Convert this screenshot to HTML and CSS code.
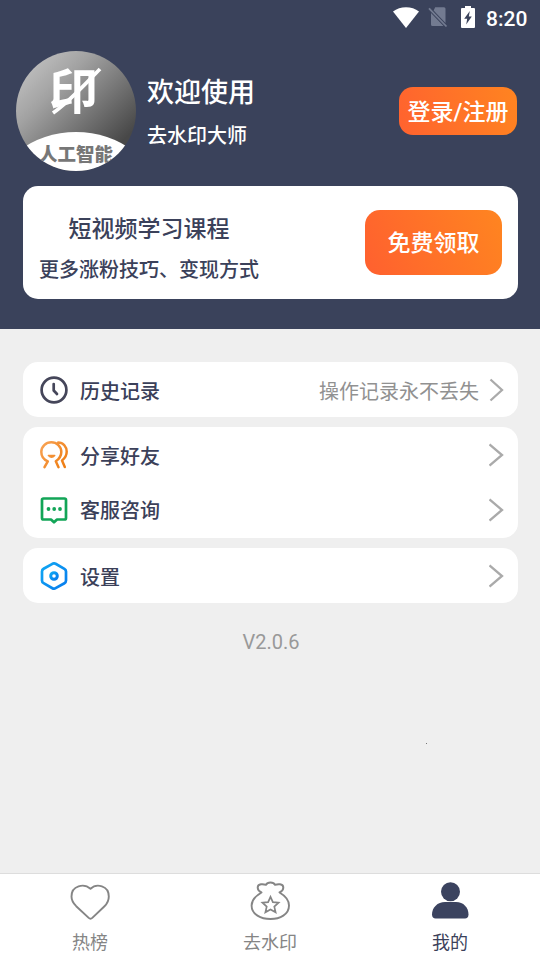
FILE: index.html
```html
<!DOCTYPE html>
<html lang="zh-CN">
<head>
<meta charset="utf-8">
<title>我的</title>
<link rel="stylesheet" href="styles.css">
</head>
<body>
<div class="app">
  <header class="header">
    <div class="status">
      <svg class="wifi" width="26" height="21" viewBox="0 0 26 21"><path d="M0 4.500C7-1.300 19-1.300 26 4.500L13 21Z" fill="#fff"/></svg>
      <svg class="sim" width="20" height="22" viewBox="0 0 20 22"><path d="M7.200 1.300H16q1.500 0 1.500 1.500v14.300L5.600 4.500ZM3 7l12.500 13H4.500q-1.500 0-1.500-1.500Z" fill="#737b91"/><path d="M1 2.300 18.500 20.500" stroke="#737b91" stroke-width="1.800"/></svg>
      <svg class="battery" width="14" height="22" viewBox="0 0 14 22"><path d="M4 0h6v2h3q1 0 1 1v18q0 1-1 1H1q-1 0-1-1V3Q0 2 1 2h3Z" fill="#fff"/><path d="M8.800 5 3.200 12.800H6.200L5.200 18.500 10.800 10.500H7.800Z" fill="#3a425b"/></svg>
      <span class="time">8:20</span>
    </div>
    <div class="profile">
      <div class="avatar">
        <span class="avatar-mark">印</span>
        <svg class="avatar-slash" width="52" height="50" viewBox="0 0 52 50"><path d="M2 47C18 36 34 18 49 3" fill="none" stroke="#fff" stroke-width="3.800"/></svg>
        <div class="avatar-base"></div>
        <span class="avatar-caption">人工智能</span>
      </div>
      <div class="names">
        <div class="welcome">欢迎使用</div>
        <div class="appname">去水印大师</div>
      </div>
      <div class="login">登录/注册</div>
    </div>
    <div class="promo">
      <div class="promo-text">
        <div class="promo-title">短视频学习课程</div>
        <div class="promo-sub">更多涨粉技巧、变现方式</div>
      </div>
      <div class="claim">免费领取</div>
    </div>
  </header>
  <main class="main">
    <section class="card">
      <div class="row">
        <svg class="icon" width="28" height="28" viewBox="0 0 28 28" fill="none" stroke="#45465a" stroke-width="2.700" stroke-linecap="round" stroke-linejoin="round"><circle cx="14" cy="14" r="12.400"/><path d="M13.700 8v6.500l3.300 3.500"/></svg>
        <span class="label">历史记录</span><span class="hint">操作记录永不丢失</span>
        <svg class="chevron" width="15" height="24" viewBox="0 0 15 24"><path d="M1.500 1.500 13 12 1.500 22.500"/></svg>
      </div>
    </section>
    <section class="card">
      <div class="row">
        <svg class="icon" width="28" height="28" viewBox="0 0 28 28" fill="none" stroke="url(#orange)" stroke-width="2.500" stroke-linecap="round" stroke-linejoin="round"><defs><linearGradient id="orange" gradientUnits="userSpaceOnUse" x1="0" y1="0" x2="28" y2="20"><stop stop-color="#f9a65a"/><stop offset="1" stop-color="#ee7d13"/></linearGradient></defs><path d="M4.500 26.200 7.800 20.300C3.500 18.500 1.300 15 1.300 11A10 9.700 0 0 1 21.300 11c0 4-2.200 7-5.500 9.300l2.700 5.900M18.200 1.400c5 0 8.500 4.600 8.500 9.200 0 3.700-1.700 6.700-4.700 8.900l2.800 6.500"/><path d="M8.300 14.500h6.500q-3.200 3.500-6.500 0Z" stroke-width="1.300" fill="#ef8a2c"/></svg>
        <span class="label">分享好友</span>
        <svg class="chevron" width="15" height="24" viewBox="0 0 15 24"><path d="M.5 1.500 13 12 .5 22.500"/></svg>
      </div>
      <div class="row">
        <svg class="icon" width="28" height="28" viewBox="0 0 28 28" fill="none" stroke="#12a557" stroke-width="2.700" stroke-linejoin="round"><path d="M3.500 2.500h21q1.500 0 1.500 1.500v18q0 1.500-1.500 1.500H17l-3 2.800-3-2.800H3.500Q2 23.500 2 22V4q0-1.500 1.500-1.500Z"/><g fill="#12a557" stroke="none"><circle cx="8.500" cy="13" r="1.900"/><circle cx="14.200" cy="13" r="1.900"/><circle cx="20" cy="13" r="1.900"/></g></svg>
        <span class="label">客服咨询</span>
        <svg class="chevron" width="15" height="24" viewBox="0 0 15 24"><path d="M.5 1.500 13 12 .5 22.500"/></svg>
      </div>
    </section>
    <section class="card">
      <div class="row">
        <svg class="icon" width="28" height="28" viewBox="0 0 28 28" fill="none" stroke="url(#blue)" stroke-width="2.700" stroke-linejoin="round"><defs><linearGradient id="blue" x1="0" y1="0" x2="1" y2="1"><stop stop-color="#10a8f3"/><stop offset="1" stop-color="#087bed"/></linearGradient></defs><path d="M12.400 1.800q1.600-.9 3.200 0l8.800 5q1.600.9 1.600 2.700v9q0 1.800-1.600 2.700l-8.800 5q-1.600.9-3.200 0l-8.800-5Q2 20.300 2 18.500v-9Q2 7.700 3.600 6.800Z"/><circle cx="14" cy="14" r="3.300" stroke-width="3"/></svg>
        <span class="label">设置</span>
        <svg class="chevron" width="15" height="24" viewBox="0 0 15 24"><path d="M.5 1.500 13 12 .5 22.500"/></svg>
      </div>
    </section>
    <div class="version">V2.0.6</div>
    <i class="speck"></i>
  </main>
  <nav class="tabs">
    <div class="tab">
      <svg width="42" height="42" viewBox="0 0 42 42" fill="none" stroke="#858585" stroke-width="1.900" stroke-linejoin="round"><path d="M21.500 7.800C27.500 2 39.800 4.500 39.800 15.500c0 4.300-1.500 7-4.300 9.700L23.300 36.900q-1.800 1.700-3.600 0L7.200 25.200C4 22 2.500 19 2.500 15.500 2.500 4.500 15 2 21.500 7.800Z"/></svg>
      <span>热榜</span>
    </div>
    <div class="tab">
      <svg width="42" height="42" viewBox="0 0 42 42" fill="none" stroke="#858585" stroke-width="1.900" stroke-linejoin="round"><path d="M12.500 11.500C7.500 9.500 7.500 3.800 12 3.300q2.500-.3 5 .5C18.500.7 24.500.7 26 3.800q2.500-.8 5-.5C35.500 3.800 35.500 9.500 30.500 11.500 36.500 15 40 19 40 24.500 40 33.500 31 38 21.500 38S2.600 33.500 2.600 24.500C2.600 19 6.500 15 12.500 11.500Z"/><path d="m21.500 15.800 2.400 5.300 5.700.6-4.300 3.900 1.300 5.700-5.100-2.900-5.100 2.900 1.300-5.700-4.300-3.900 5.700-.6Z" stroke-width="1.700" stroke-linejoin="miter"/></svg>
      <span>去水印</span>
    </div>
    <div class="tab active">
      <svg width="42" height="42" viewBox="0 0 42 42" fill="#3b435f"><circle cx="21.500" cy="10.700" r="9.500"/><path d="M16 21h11c7.500 0 12.500 5.500 12.500 12.500 0 2.700-1.500 4-3.500 4H6.500c-2 0-3.500-1.300-3.500-4C3 26.500 8.500 21 16 21Z"/></svg>
      <span>我的</span>
    </div>
  </nav>
</div>
</body>
</html>
```
FILE: styles.css
```css
* { box-sizing: border-box; }
body { margin: 0; font-family: Roboto, "Noto Sans CJK SC", sans-serif; }
svg { display: block; flex: none; }
.app { width: 540px; height: 960px; display: flex; flex-direction: column; background: #efefef; overflow: hidden; }
.header { height: 329px; background: #3a425b; color: #fff; }
.status { height: 34px; padding-right: 12px; display: flex; align-items: center; justify-content: flex-end; }
.wifi { margin-right: 9px; }
.sim { margin-right: 13px; }
.battery { margin-right: 11px; }
.time { font-size: 21px; font-weight: 500; line-height: 34px; padding-top: 3px; width: 42px; white-space: nowrap; }
.profile { display: flex; align-items: center; height: 120px; margin: 17px 23px 0 16px; }
.avatar { position: relative; width: 120px; height: 120px; border-radius: 50%; overflow: hidden; background: linear-gradient(135deg, #c6c6c6 5%, #a2a2a2 32%, #484848 82%); }
.avatar-mark { position: absolute; left: 33px; top: 17px; font-size: 49px; line-height: 49px; font-weight: 700; }
.avatar-slash { position: absolute; left: 35px; top: 15px; }
.avatar-base { position: absolute; left: -21px; top: 81px; width: 162px; height: 130px; border-radius: 50%; background: #fff; }
.avatar-caption { position: absolute; left: 23px; top: 93px; font-size: 18.500px; line-height: 22px; font-weight: 900; color: #777; white-space: nowrap; }
.names { flex: 1; padding-left: 11px; font-weight: 500; }
.welcome { font-size: 27px; line-height: 40px; margin-top: 2px; }
.appname { font-size: 20px; line-height: 30px; margin-top: 8px; }
.login { width: 118px; height: 48px; padding-top: 2px; border-radius: 14px; background: linear-gradient(75deg, #ff622f, #ff8420); font-size: 23px; line-height: 46px; font-weight: 500; text-align: center; white-space: nowrap; }
.login { line-height: 48px; }
.promo { display: flex; align-items: center; justify-content: space-between; height: 113px; margin: 15px 22px 0 23px; padding: 0 16px; border-radius: 15px; background: #fff; }
.promo-text { padding-top: 15px; color: #3b415a; font-weight: 500; text-align: center; white-space: nowrap; }
.promo-title { font-size: 23px; line-height: 40px; }
.promo-sub { font-size: 20px; line-height: 40px; }
.claim { width: 137px; height: 65px; padding-top: 1px; border-radius: 15px; background: linear-gradient(65deg, #ff602f, #ff8520); font-size: 23px; line-height: 65px; font-weight: 500; text-align: center; }
.main { position: relative; flex: 1; display: flex; flex-direction: column; gap: 10px; padding: 33px 22px 0 23px; }
.card { border-radius: 15px; background: #fff; }
.card .row { height: 55px; display: flex; align-items: center; padding: 1px 14px 0 17px; }
.card .row + .row { height: 56px; padding: 0 14px 1px 17px; }
.icon { margin-right: 12px; }
.label { flex: 1; font-size: 20px; font-weight: 500; color: #3b4059; }
.hint { font-size: 20px; color: #919191; margin-right: 10px; }
.chevron { fill: none; stroke: #aaa; stroke-width: 2.300; }
.version { font-size: 20px; line-height: 30px; margin: 14px 0 0 1px; text-align: center; color: #999; }
.speck { position: absolute; left: 426px; top: 414px; width: 1px; height: 1px; background: #777; }
.tabs { height: 87px; display: flex; border-top: 1px solid #ddd; background: #fff; }
.tab { flex: 1; display: flex; flex-direction: column; align-items: center; padding-top: 7px; font-size: 18px; line-height: 28px; color: #858585; }
.tab span { margin-top: 6px; }
.active { color: #3b415a; }
```
